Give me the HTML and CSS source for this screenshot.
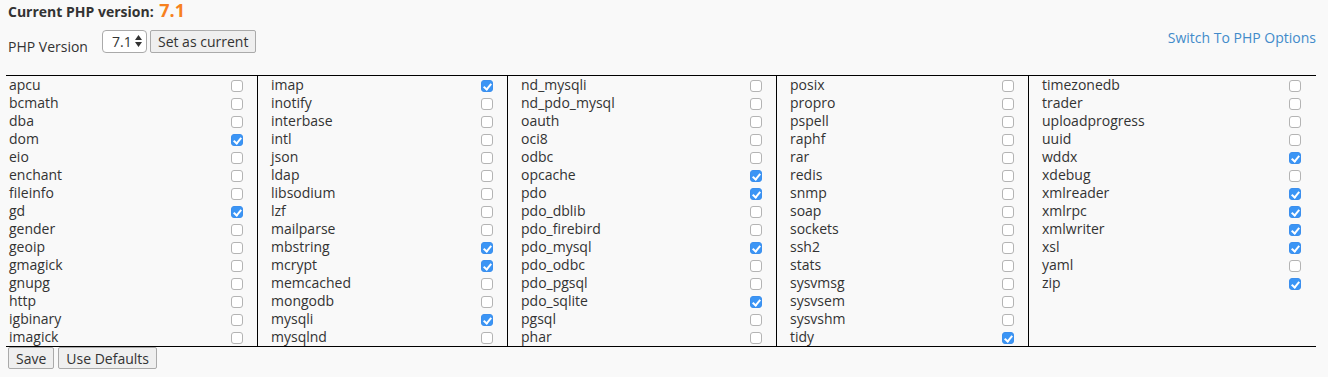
FILE: index.html
```html
<!DOCTYPE html>
<html lang="en">
<head>
  <meta charset="UTF-8" />
  <meta name="viewport" content="width=device-width, initial-scale=1" />
  <title>PHP Extensions</title>
  <link rel="stylesheet" href="styles.css">
</head>
<body>
  <div class="page">
    <h1 class="current">Current PHP version: <span class="ver">7.1</span></h1>

    <div class="version-row">
      <form class="set-form">
        <label for="ver">PHP Version</label>
        <span class="select-wrap">
          <select id="ver">
            <option>7.1</option>
          </select>
          <svg class="arrows" width="7" height="12" viewBox="0 0 7 12"><path d="M3.5 0 7 5H0z M0 7h7l-3.5 5z" fill="#333"/></svg>
        </span>
        <button type="button" class="btn">Set as current</button>
      </form>
      <a href="#" class="switch">Switch To PHP Options</a>
    </div>

    <div class="ext-table">
      <div class="col">
        <div class="row"><span>apcu</span><input type="checkbox"></div>
        <div class="row"><span>bcmath</span><input type="checkbox"></div>
        <div class="row"><span>dba</span><input type="checkbox"></div>
        <div class="row"><span>dom</span><input type="checkbox" checked></div>
        <div class="row"><span>eio</span><input type="checkbox"></div>
        <div class="row"><span>enchant</span><input type="checkbox"></div>
        <div class="row"><span>fileinfo</span><input type="checkbox"></div>
        <div class="row"><span>gd</span><input type="checkbox" checked></div>
        <div class="row"><span>gender</span><input type="checkbox"></div>
        <div class="row"><span>geoip</span><input type="checkbox"></div>
        <div class="row"><span>gmagick</span><input type="checkbox"></div>
        <div class="row"><span>gnupg</span><input type="checkbox"></div>
        <div class="row"><span>http</span><input type="checkbox"></div>
        <div class="row"><span>igbinary</span><input type="checkbox"></div>
        <div class="row"><span>imagick</span><input type="checkbox"></div>
      </div>
      <div class="col">
        <div class="row"><span>imap</span><input type="checkbox" checked></div>
        <div class="row"><span>inotify</span><input type="checkbox"></div>
        <div class="row"><span>interbase</span><input type="checkbox"></div>
        <div class="row"><span>intl</span><input type="checkbox"></div>
        <div class="row"><span>json</span><input type="checkbox"></div>
        <div class="row"><span>ldap</span><input type="checkbox"></div>
        <div class="row"><span>libsodium</span><input type="checkbox"></div>
        <div class="row"><span>lzf</span><input type="checkbox"></div>
        <div class="row"><span>mailparse</span><input type="checkbox"></div>
        <div class="row"><span>mbstring</span><input type="checkbox" checked></div>
        <div class="row"><span>mcrypt</span><input type="checkbox" checked></div>
        <div class="row"><span>memcached</span><input type="checkbox"></div>
        <div class="row"><span>mongodb</span><input type="checkbox"></div>
        <div class="row"><span>mysqli</span><input type="checkbox" checked></div>
        <div class="row"><span>mysqlnd</span><input type="checkbox"></div>
      </div>
      <div class="col">
        <div class="row"><span>nd_mysqli</span><input type="checkbox"></div>
        <div class="row"><span>nd_pdo_mysql</span><input type="checkbox"></div>
        <div class="row"><span>oauth</span><input type="checkbox"></div>
        <div class="row"><span>oci8</span><input type="checkbox"></div>
        <div class="row"><span>odbc</span><input type="checkbox"></div>
        <div class="row"><span>opcache</span><input type="checkbox" checked></div>
        <div class="row"><span>pdo</span><input type="checkbox" checked></div>
        <div class="row"><span>pdo_dblib</span><input type="checkbox"></div>
        <div class="row"><span>pdo_firebird</span><input type="checkbox"></div>
        <div class="row"><span>pdo_mysql</span><input type="checkbox" checked></div>
        <div class="row"><span>pdo_odbc</span><input type="checkbox"></div>
        <div class="row"><span>pdo_pgsql</span><input type="checkbox"></div>
        <div class="row"><span>pdo_sqlite</span><input type="checkbox" checked></div>
        <div class="row"><span>pgsql</span><input type="checkbox"></div>
        <div class="row"><span>phar</span><input type="checkbox"></div>
      </div>
      <div class="col">
        <div class="row"><span>posix</span><input type="checkbox"></div>
        <div class="row"><span>propro</span><input type="checkbox"></div>
        <div class="row"><span>pspell</span><input type="checkbox"></div>
        <div class="row"><span>raphf</span><input type="checkbox"></div>
        <div class="row"><span>rar</span><input type="checkbox"></div>
        <div class="row"><span>redis</span><input type="checkbox"></div>
        <div class="row"><span>snmp</span><input type="checkbox"></div>
        <div class="row"><span>soap</span><input type="checkbox"></div>
        <div class="row"><span>sockets</span><input type="checkbox"></div>
        <div class="row"><span>ssh2</span><input type="checkbox"></div>
        <div class="row"><span>stats</span><input type="checkbox"></div>
        <div class="row"><span>sysvmsg</span><input type="checkbox"></div>
        <div class="row"><span>sysvsem</span><input type="checkbox"></div>
        <div class="row"><span>sysvshm</span><input type="checkbox"></div>
        <div class="row"><span>tidy</span><input type="checkbox" checked></div>
      </div>
      <div class="col last">
        <div class="row"><span>timezonedb</span><input type="checkbox"></div>
        <div class="row"><span>trader</span><input type="checkbox"></div>
        <div class="row"><span>uploadprogress</span><input type="checkbox"></div>
        <div class="row"><span>uuid</span><input type="checkbox"></div>
        <div class="row"><span>wddx</span><input type="checkbox" checked></div>
        <div class="row"><span>xdebug</span><input type="checkbox"></div>
        <div class="row"><span>xmlreader</span><input type="checkbox" checked></div>
        <div class="row"><span>xmlrpc</span><input type="checkbox" checked></div>
        <div class="row"><span>xmlwriter</span><input type="checkbox" checked></div>
        <div class="row"><span>xsl</span><input type="checkbox" checked></div>
        <div class="row"><span>yaml</span><input type="checkbox"></div>
        <div class="row"><span>zip</span><input type="checkbox" checked></div>
      </div>
    </div>

    <div class="actions">
      <button type="button" class="btn">Save</button>
      <button type="button" class="btn">Use Defaults</button>
    </div>
  </div>
</body>
</html>
```

FILE: styles.css
```css
body {
  font-family: "Open Sans", "Liberation Sans", sans-serif;
  font-size: 14px;
  background: #f9f9f9;
  color: #333;
  margin: 0;
  padding: 0;
}
.page {
  padding: 0 12px 0 8px;
}
.current {
  margin: 0;
  font-size: 14px;
  font-weight: bold;
  line-height: 20px;
}
.ver {
  font-size: 18px;
  color: #f7811e;
  margin-left: 2px;
}
.version-row {
  display: flex;
  justify-content: space-between;
  align-items: flex-start;
  margin-top: 8px;
}
.set-form {
  display: flex;
  align-items: flex-start;
}
.set-form label {
  line-height: 18px;
  padding-top: 8px;
  margin-right: 14px;
}
.select-wrap {
  position: relative;
  display: inline-block;
}
select {
  appearance: none;
  -webkit-appearance: none;
  width: 45px;
  height: 23px;
  border: 1px solid #aaa;
  border-radius: 4px;
  background: #fff;
  font-family: inherit;
  font-size: 14px;
  color: #333;
  padding: 0 0 0 9px;
  margin: 0;
}
.arrows {
  position: absolute;
  left: 33px;
  top: 5px;
  pointer-events: none;
}
.btn {
  font-family: inherit;
  font-size: 14px;
  color: #333;
  height: 23px;
  padding: 0 7px;
  margin: 0;
  background: #efefef;
  border: 1px solid #aaa;
  border-radius: 2px;
}
.set-form .btn {
  margin-left: 3px;
}
.switch {
  color: #428bca;
  text-decoration: none;
  line-height: 18px;
  margin-top: -1px;
}
.ext-table {
  display: grid;
  grid-template-columns: 251px 250px 269px 252px 288px;
  border-top: 1px solid #000;
  border-bottom: 1px solid #000;
  margin: 19px 0 0 -2px;
}
.col {
  padding: 0 14px 0 13px;
  border-left: 1px solid #000;
}
.col:first-child {
  border-left: none;
  padding-left: 3px;
}
.col.last {
  padding-right: 15px;
}
.row {
  display: flex;
  justify-content: space-between;
  align-items: center;
  height: 18px;
  line-height: 18px;
}
input[type="checkbox"] {
  appearance: none;
  -webkit-appearance: none;
  position: relative;
  width: 12px;
  height: 12px;
  margin: 1px 0 0;
  border: 1px solid #b4b4b4;
  border-radius: 3px;
  background: #fff;
}
input[type="checkbox"]:checked {
  background: #3b95f5;
  border-color: #3b8fee;
}
input[type="checkbox"]:checked::after {
  content: "";
  position: absolute;
  left: 3px;
  top: 1px;
  width: 3px;
  height: 6px;
  border: solid #fff;
  border-width: 0 2px 2px 0;
  transform: rotate(40deg);
}
.actions {
  display: flex;
  gap: 4px;
}
.actions .btn {
  height: 22px;
  padding: 0 7px;
}
```
